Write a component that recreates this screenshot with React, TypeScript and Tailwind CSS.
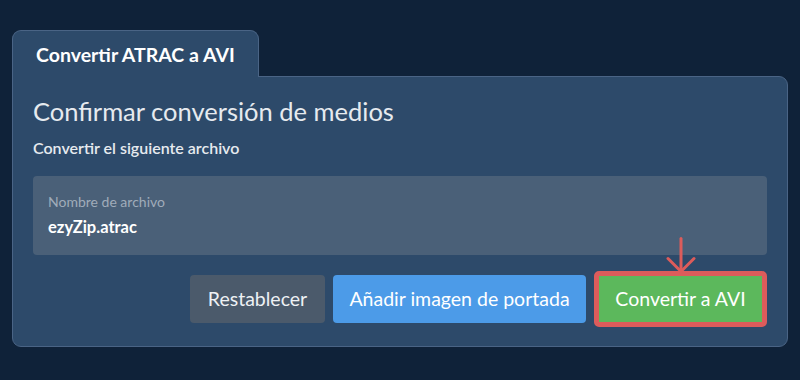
export default function App() {
  return (
    <div
      className="w-[800px] h-[380px] bg-[#0f2239] pt-[30px] px-[12px]"
      style={{ fontFamily: "Lato, 'Noto Sans', sans-serif" }}
    >
      <div className="flex">
        <div className="relative z-10 -mb-px h-[47px] rounded-t-[9px] border-x border-t border-[#4a6485] bg-[#2d4a6a] px-[23px] pt-[13px] text-[19.5px] font-bold leading-[22px] text-white">
          Convertir ATRAC a AVI
        </div>
      </div>
      <div className="w-[776px] rounded-b-[9px] rounded-tr-[9px] border border-[#4a6485] bg-[#2d4a6a] px-[20px] pt-[19px] pb-[19px]">
        <h1 className="text-[25.5px] font-normal leading-[31px] text-[#e6eaef]">
          Confirmar conversión de medios
        </h1>
        <p className="mt-[12px] text-[16px] font-semibold leading-[18px] text-[#e6eaef]">
          Convertir el siguiente archivo
        </p>
        <div className="mt-[19px] h-[79px] rounded-[4px] bg-[#4a6078] px-[15px] pt-[18px]">
          <div className="text-[14px] leading-[16px] text-[#a0acba]">Nombre de archivo</div>
          <div className="mt-[8px] text-[16.5px] font-bold leading-[19px] text-white">ezyZip.atrac</div>
        </div>
        <div className="mt-[16px] flex items-center justify-end gap-[8px]">
          <button className="h-[48px] w-[135px] rounded-[4px] bg-[#4b5a6b] text-[19.5px] leading-none text-[#eef1f4]">
            Restablecer
          </button>
          <button className="h-[48px] w-[253px] rounded-[4px] bg-[#4c9be8] text-[19.5px] leading-none text-white">
            Añadir imagen de portada
          </button>
          <div className="relative rounded-[5px] border-[5px] border-[#dc5c5b]">
            <svg
              className="absolute bottom-full left-1/2 mb-[2px] -translate-x-1/2"
              width="30"
              height="37"
              viewBox="0 0 30 37"
              fill="none"
              stroke="#dc5c5b"
              strokeWidth="3"
              strokeLinecap="round"
              strokeLinejoin="round"
            >
              <path d="M15 1.5V35" />
              <path d="M2 21.5L15 34.5L28 21.5" />
            </svg>
            <button className="block h-[46px] w-[163px] bg-[#5cb85c] text-[19.5px] leading-none text-white">
              Convertir a AVI
            </button>
          </div>
        </div>
      </div>
    </div>
  );
}
